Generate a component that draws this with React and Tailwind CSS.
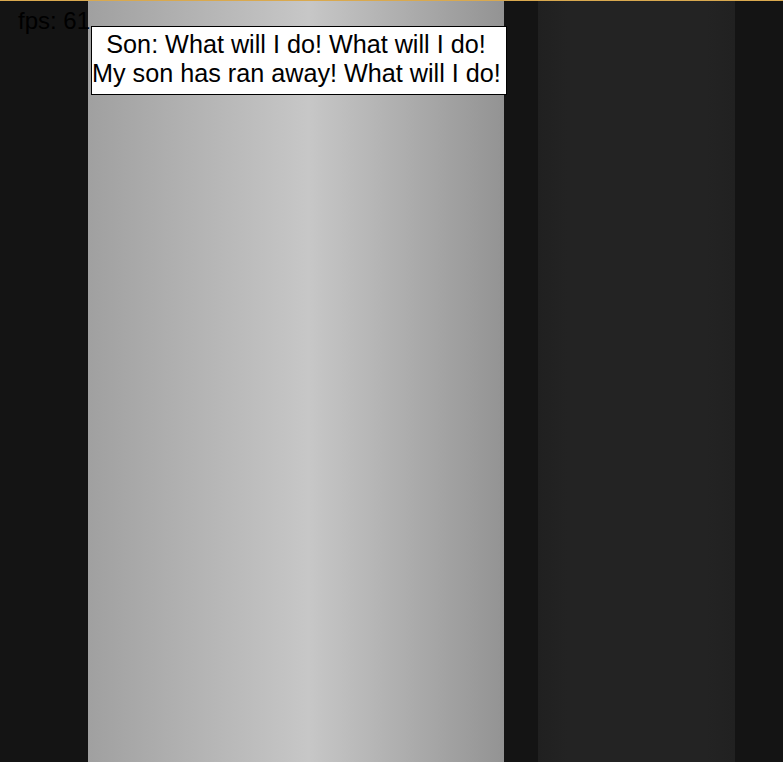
import React from 'react';

const font = { fontFamily: '"Liberation Sans", Arial, sans-serif' };

export default function App() {
  return (
    <div className="relative h-screen w-full overflow-hidden bg-[#141414] border-t border-[#d9a94f]" style={font}>
      {/* Stage columns */}
      <div className="flex h-full">
        <div className="w-[88px] shrink-0" />
        <div className="w-[416px] shrink-0 bg-[linear-gradient(to_right,#a0a0a0,#c7c7c7_53%,#939393)]" />
        <div className="w-[34px] shrink-0" />
        <div className="w-[197px] shrink-0 bg-[linear-gradient(to_right,#202020,#232323_15%,#232323_85%,#212121)]" />
        <div className="flex-1" />
      </div>

      {/* fps counter */}
      <div className="absolute left-[18px] top-[6px] text-[24px] leading-[28px] text-black">fps: 61</div>

      {/* Dialogue box */}
      <div className="absolute left-[91px] top-[25px] w-[416px] border border-black bg-white pt-[3px] pb-[6px] pr-[6px] text-center text-[25.2px] leading-[29px] text-black whitespace-nowrap">
        <div>Son: What will I do! What will I do!</div>
        <div>My son has ran away! What will I do!</div>
      </div>
    </div>
  );
}
